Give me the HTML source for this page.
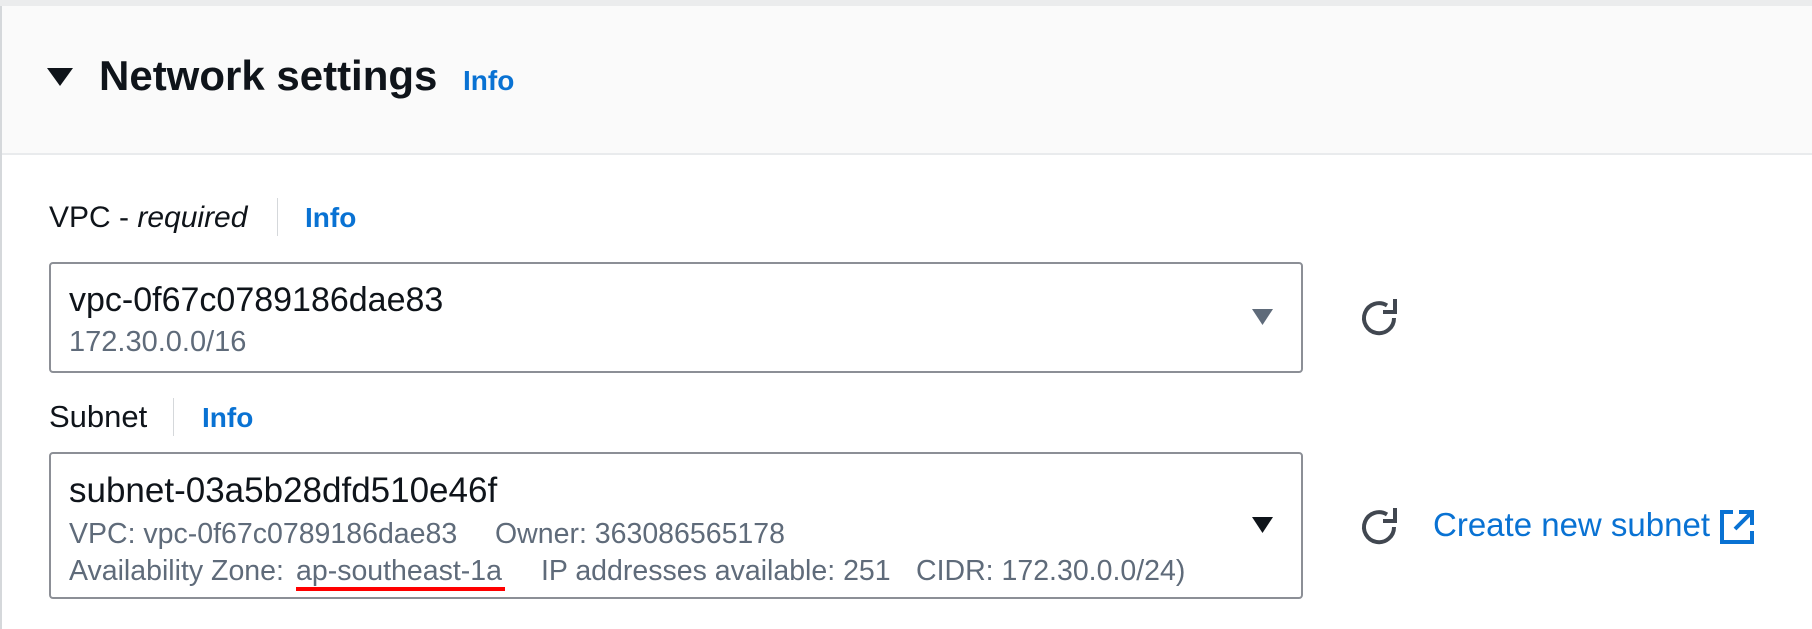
<!DOCTYPE html>
<html><head><meta charset="utf-8"><style>
body{margin:0;width:1812px;height:629px;overflow:hidden;background:#fff;font-family:"Liberation Sans",sans-serif;position:relative}
.a{position:absolute;line-height:1;white-space:nowrap}
.info{color:#0972d3;font-weight:bold;font-size:28px}
.g{color:#5f6b7a;font-size:28.5px}
.box{position:absolute;border:2px solid #8c8f96;border-radius:4px;background:#fff;box-sizing:border-box}
</style></head><body>
<div style="position:absolute;left:0;top:0;width:1812px;height:6px;background:#ebeced"></div>
<div style="position:absolute;left:0;top:6px;width:1812px;height:147px;background:#fafafa;border-bottom:2px solid #e9ebed"></div>
<div style="position:absolute;left:0;top:6px;width:2px;height:623px;background:#d5d8db"></div>
<svg class="a" style="left:47px;top:68px" width="26" height="18"><polygon points="0,0 26,0 13,18" fill="#0f141a"/></svg>
<div class="a" style="left:99px;top:55px;font-size:42px;font-weight:bold;color:#0f141a">Network settings</div>
<div class="a info" style="left:463px;top:67px">Info</div>

<div class="a" style="left:49px;top:203px;font-size:30px;color:#0f141a">VPC - <i>required</i></div>
<div style="position:absolute;left:277px;top:198px;width:1px;height:38px;background:#d5d8db"></div>
<div class="a info" style="left:305px;top:204px">Info</div>

<div class="box" style="left:49px;top:262px;width:1254px;height:111px"></div>
<div class="a" style="left:69px;top:283px;font-size:34px;color:#0f141a">vpc-0f67c0789186dae83</div>
<div class="a g" style="left:69px;top:328px;font-size:29px">172.30.0.0/16</div>
<svg class="a" style="left:1252px;top:309px" width="21" height="16"><polygon points="0,0 21,0 10.5,16" fill="#5f6b7a"/></svg>
<svg class="a" style="left:1358px;top:296px" width="44" height="44" viewBox="0 0 44 44"><path d="M36 22 A15 15 0 1 1 29 9.5" fill="none" stroke="#414750" stroke-width="4"/><path d="M37 3 V16 H25" fill="none" stroke="#414750" stroke-width="4"/></svg>

<div class="a" style="left:49px;top:401px;font-size:31px;color:#0f141a">Subnet</div>
<div style="position:absolute;left:173px;top:398px;width:1px;height:38px;background:#d5d8db"></div>
<div class="a info" style="left:202px;top:404px">Info</div>

<div class="box" style="left:49px;top:452px;width:1254px;height:147px"></div>
<div class="a" style="left:69px;top:473px;font-size:35px;color:#0f141a">subnet-03a5b28dfd510e46f</div>
<div class="a g" style="left:69px;top:520px">VPC: vpc-0f67c0789186dae83</div>
<div class="a g" style="left:495px;top:520px">Owner: 363086565178</div>
<div class="a g" style="left:69px;top:557px">Availability Zone:</div>
<div class="a g" style="left:296px;top:557px">ap-southeast-1a</div>
<div class="a g" style="left:541px;top:557px">IP addresses available: 251</div>
<div class="a g" style="left:916px;top:557px">CIDR: 172.30.0.0/24)</div>
<div style="position:absolute;left:296px;top:587px;width:209px;height:4px;background:#ff0000"></div>
<svg class="a" style="left:1252px;top:517px" width="21" height="16"><polygon points="0,0 21,0 10.5,16" fill="#0f141a"/></svg>
<svg class="a" style="left:1358px;top:505px" width="44" height="44" viewBox="0 0 44 44"><path d="M36 22 A15 15 0 1 1 29 9.5" fill="none" stroke="#414750" stroke-width="4"/><path d="M37 3 V16 H25" fill="none" stroke="#414750" stroke-width="4"/></svg>
<div class="a" style="left:1433px;top:508px;font-size:33px;color:#0972d3">Create new subnet</div>
<svg class="a" style="left:1719px;top:509px" width="36" height="36" viewBox="0 0 36 36"><path d="M14 3 H3 V33 H33 V22" fill="none" stroke="#0972d3" stroke-width="4"/><path d="M20 3 H33 V16 M33 3 L16 20" fill="none" stroke="#0972d3" stroke-width="4"/></svg>
</body></html>
